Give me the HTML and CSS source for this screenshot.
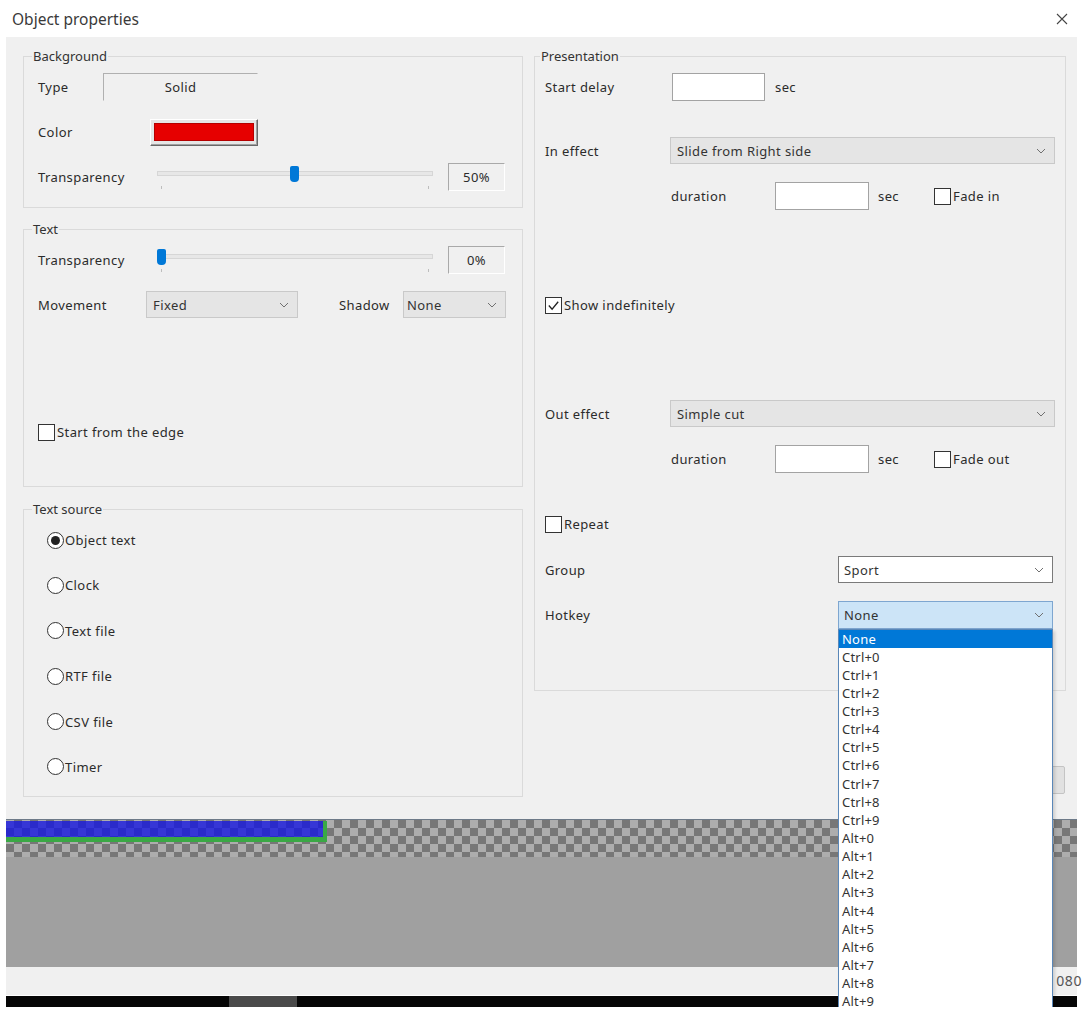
FILE: index.html
```html
<!DOCTYPE html>
<html lang="en">
<head>
    <meta charset="UTF-8">
    <meta name="viewport" content="width=device-width, initial-scale=1.0">
    <title>Object properties</title>
    <link rel="stylesheet" href="styles.css">
</head>
<body>
    <header class="titlebar">
        <span class="title">Object properties</span>
        <svg class="close" viewBox="0 0 12 12"><path d="M1 1 L11 11 M11 1 L1 11"/></svg>
    </header>

    <main class="dialog">
        <div class="columns">
            <div class="col col-left">
                <!-- BACKGROUND -->
                <fieldset class="group group-bg">
                    <legend>Background</legend>
                    <div class="row">
                        <span class="lbl lbl-type">Type</span>
                        <span class="sunken sunken-type">Solid</span>
                    </div>
                    <div class="row mt-17">
                        <span class="lbl lbl-color">Color</span>
                        <span class="color-btn"><span class="swatch"></span></span>
                    </div>
                    <div class="row mt-17">
                        <span class="lbl lbl-slider">Transparency</span>
                        <div class="slider">
                            <div class="rail"><span class="thumb" style="left: 50%"></span></div>
                        </div>
                        <span class="sunken sunken-value">50%</span>
                    </div>
                </fieldset>

                <!-- TEXT -->
                <fieldset class="group group-text">
                    <legend>Text</legend>
                    <div class="row">
                        <span class="lbl lbl-slider">Transparency</span>
                        <div class="slider">
                            <div class="rail"><span class="thumb" style="left: 0%"></span></div>
                        </div>
                        <span class="sunken sunken-value">0%</span>
                    </div>
                    <div class="row row-combo mt-17">
                        <span class="lbl lbl-move">Movement</span>
                        <span class="combo combo-move">Fixed<svg class="chev" viewBox="0 0 10 6"><polyline points="1,1 5,5 9,1"/></svg></span>
                        <span class="lbl lbl-shadow">Shadow</span>
                        <span class="combo combo-shadow">None<svg class="chev" viewBox="0 0 10 6"><polyline points="1,1 5,5 9,1"/></svg></span>
                    </div>
                    <label class="row row-check mt-104">
                        <span class="check"></span>Start from the edge
                    </label>
                </fieldset>

                <!-- TEXT SOURCE -->
                <fieldset class="group group-source">
                    <legend>Text source</legend>
                    <div class="radio-list">
                        <label class="row row-check"><span class="radio on"><span class="dot"></span></span>Object text</label>
                        <label class="row row-check"><span class="radio"></span>Clock</label>
                        <label class="row row-check"><span class="radio"></span>Text file</label>
                        <label class="row row-check"><span class="radio"></span>RTF file</label>
                        <label class="row row-check"><span class="radio"></span>CSV file</label>
                        <label class="row row-check"><span class="radio"></span>Timer</label>
                    </div>
                </fieldset>
            </div>

            <div class="col col-right">
                <!-- PRESENTATION -->
                <fieldset class="group group-present">
                    <legend>Presentation</legend>
                    <div class="row">
                        <span class="lbl lbl-wide">Start delay</span>
                        <span class="edit edit-delay"></span>
                        <span class="unit">sec</span>
                    </div>
                    <div class="row mt-36 row-combo">
                        <span class="lbl lbl-effect">In effect</span>
                        <span class="combo combo-effect">Slide from Right side<svg class="chev" viewBox="0 0 10 6"><polyline points="1,1 5,5 9,1"/></svg></span>
                    </div>
                    <div class="row mt-18 row-sub">
                        <span class="lbl lbl-dur">duration</span>
                        <span class="edit edit-dur"></span>
                        <span class="unit unit-dur">sec</span>
                        <span class="check"></span>Fade in
                    </div>
                    <label class="row row-check mt-85">
                        <span class="check checked"><svg viewBox="0 0 16 16"><polyline points="3,8 6.5,12 13,4"/></svg></span>Show indefinitely
                    </label>
                    <div class="row mt-85 row-combo">
                        <span class="lbl lbl-effect">Out effect</span>
                        <span class="combo combo-effect">Simple cut<svg class="chev" viewBox="0 0 10 6"><polyline points="1,1 5,5 9,1"/></svg></span>
                    </div>
                    <div class="row mt-18 row-sub">
                        <span class="lbl lbl-dur">duration</span>
                        <span class="edit edit-dur"></span>
                        <span class="unit unit-dur">sec</span>
                        <span class="check"></span>Fade out
                    </div>
                    <label class="row row-check mt-41">
                        <span class="check"></span>Repeat
                    </label>
                    <div class="row mt-22 row-combo">
                        <span class="lbl lbl-group">Group</span>
                        <span class="combo combo-edit">Sport<svg class="chev" viewBox="0 0 10 6"><polyline points="1,1 5,5 9,1"/></svg></span>
                    </div>
                    <div class="row mt-18 row-combo">
                        <span class="lbl lbl-group">Hotkey</span>
                        <div class="dropdown">
                            <span class="combo combo-edit combo-open">None<svg class="chev" viewBox="0 0 10 6"><polyline points="1,1 5,5 9,1"/></svg></span>
                            <ul class="list">
                                <li class="selected">None</li>
                                <li>Ctrl+0</li>
                                <li>Ctrl+1</li>
                                <li>Ctrl+2</li>
                                <li>Ctrl+3</li>
                                <li>Ctrl+4</li>
                                <li>Ctrl+5</li>
                                <li>Ctrl+6</li>
                                <li>Ctrl+7</li>
                                <li>Ctrl+8</li>
                                <li>Ctrl+9</li>
                                <li>Alt+0</li>
                                <li>Alt+1</li>
                                <li>Alt+2</li>
                                <li>Alt+3</li>
                                <li>Alt+4</li>
                                <li>Alt+5</li>
                                <li>Alt+6</li>
                                <li>Alt+7</li>
                                <li>Alt+8</li>
                                <li>Alt+9</li>
                            </ul>
                        </div>
                    </div>
                </fieldset>

                <div class="actions">
                    <button class="btn">OK</button>
                </div>
            </div>
        </div>

        <!-- PREVIEW -->
        <div class="preview">
            <div class="strip"><div class="ticker"></div></div>
        </div>
        <div class="status">1920 x 1080</div>
    </main>

    <div class="timeline"><span class="playhead"></span></div>
</body>
</html>
```

FILE: styles.css
```css
html, body {
    margin: 0;
    overflow: hidden;
}

body {
    background: #fff;
    font-family: "Noto Sans", "Open Sans", sans-serif;
    font-size: 13px;
    letter-spacing: 0.4px;
    color: #2b2b2b;
}

/* TITLE BAR */
.titlebar {
    height: 37px;
    display: flex;
    align-items: center;
    justify-content: space-between;
    padding: 0 19px 0 12px;
}

.title {
    font-size: 15.5px;
    letter-spacing: 0;
    color: #3a3a3a;
}

.close {
    width: 12px;
    height: 12px;
    stroke: #444;
    stroke-width: 1.1;
    fill: none;
}

/* DIALOG */
.dialog {
    margin: 0 10px 0 6px;
    background: #f0f0f0;
    padding-top: 11px;
}

.columns {
    display: flex;
    gap: 11px;
    padding-left: 17px;
}

.col-left {
    width: 500px;
    display: flex;
    flex-direction: column;
}

.col-right {
    width: 532px;
}

/* Group boxes */
.group {
    margin: 0;
    border: 1px solid #dadada;
    padding: 9px 8px 16px 8px;
    min-width: 0;
}

.group legend {
    padding: 0 1px;
    line-height: 16px;
    letter-spacing: 0;
    color: #333;
}

.group-text {
    margin-top: 13px;
    padding-bottom: 44px;
}

.group-source {
    margin-top: 14px;
    padding: 13px 8px 19px 8px;
}

.group-present {
    padding: 9px 10px 62px 5px;
}

.row {
    display: flex;
    align-items: center;
    height: 28px;
    padding-left: 6px;
}

.group-present .row {
    padding-left: 5px;
}

.row-combo {
    height: 27px;
}

.row-check {
    height: 20px;
}

.mt-17 { margin-top: 17px; }
.mt-18 { margin-top: 18px; }
.mt-22 { margin-top: 22px; }
.mt-36 { margin-top: 36px; }
.mt-41 { margin-top: 41px; }
.mt-85 { margin-top: 85px; }
.mt-104 { margin-top: 104px; }

.lbl {
    flex: 0 0 auto;
}

.lbl-type { width: 65px; }
.lbl-color { width: 112px; }
.lbl-slider { width: 117px; }
.lbl-move { width: 108px; }
.lbl-shadow { width: 64px; margin-left: 41px; }
.lbl-wide { width: 127px; }
.lbl-effect { width: 125px; }
.lbl-dur { width: 104px; }
.lbl-group { width: 293px; }

.row-sub {
    padding-left: 131px !important;
}

/* Sunken statics */
.sunken {
    box-sizing: border-box;
    height: 28px;
    display: flex;
    align-items: center;
    justify-content: center;
    border: 1px solid;
    border-color: #a9a9a9 #fff #fff #a9a9a9;
}

.sunken-type {
    width: 155px;
    border-color: #b0b0b0 transparent transparent #b0b0b0;
}

.sunken-value {
    width: 57px;
    margin-left: 13px;
}

/* Color button */
.color-btn {
    box-sizing: border-box;
    width: 108px;
    height: 27px;
    padding: 3px 3px 4px 3px;
    border: 1px solid;
    border-color: #fff #696969 #696969 #fff;
    box-shadow: inset -1px -1px 0 #a0a0a0;
    background: #e6e6e6;
    display: flex;
}

.swatch {
    flex: 1;
    background: #e60000;
    border: 1px solid #b40000;
}

/* Slider */
.slider {
    position: relative;
    width: 280px;
    height: 28px;
}

.slider::before {
    content: "";
    position: absolute;
    left: 2px;
    right: 2px;
    top: 8px;
    height: 3px;
    background: #e7e7e7;
    border: 1px solid #d6d6d6;
}

.slider::after {
    content: "";
    position: absolute;
    left: 6px;
    right: 6px;
    top: 23px;
    height: 3px;
    border-left: 1px solid #bdbdbd;
    border-right: 1px solid #bdbdbd;
}

.rail {
    position: relative;
    margin: 0 7px;
    height: 100%;
}

.thumb {
    position: absolute;
    top: 3px;
    width: 9px;
    height: 16px;
    margin-left: -5px;
    background: #0078d7;
    border-radius: 2px 2px 4px 4px;
}

/* Combo boxes */
.combo {
    box-sizing: border-box;
    height: 100%;
    display: flex;
    align-items: center;
    justify-content: space-between;
    padding: 0 8px 0 6px;
    background: #e5e5e5;
    border: 1px solid #c9c9c9;
    color: #333;
}

.combo-move { width: 152px; }
.combo-shadow { width: 103px; padding-left: 3px; }
.combo-effect { width: 385px; }

.combo-edit {
    width: 215px;
    background: #fff;
    border-color: #7a7a7a;
    padding-left: 5px;
}

.combo-open {
    height: 28px;
    background: #cce4f7;
    border-color: #7ea6d0;
}

.chev {
    width: 10px;
    height: 6px;
    fill: none;
    stroke: #707070;
    stroke-width: 1;
}

/* Edits */
.edit {
    box-sizing: border-box;
    height: 28px;
    background: #fff;
    border: 1px solid #a3a3a3;
}

.edit-delay { width: 93px; }
.edit-dur { width: 94px; }

.unit {
    margin-left: 10px;
}

.unit-dur {
    width: 56px;
    margin-left: 9px;
}

/* Check & radio */
.check {
    box-sizing: border-box;
    width: 17px;
    height: 17px;
    margin-right: 2px;
    background: #fff;
    border: 1px solid #333;
    display: flex;
}

.check svg {
    width: 100%;
    height: 100%;
    fill: none;
    stroke: #222;
    stroke-width: 1.4;
}

.radio-list {
    display: flex;
    flex-direction: column;
    gap: 25.4px;
}

.radio-list .row {
    padding-left: 15px;
}

.radio {
    box-sizing: border-box;
    width: 17px;
    height: 17px;
    margin-right: 1px;
    border-radius: 50%;
    background: #fff;
    border: 1px solid #333;
    display: flex;
    align-items: center;
    justify-content: center;
}

.radio .dot {
    width: 9px;
    height: 9px;
    border-radius: 50%;
    background: #222;
}

/* Dropdown popup */
.dropdown {
    position: relative;
    height: 28px;
}

.list {
    position: absolute;
    top: 100%;
    left: 0;
    z-index: 10;
    box-sizing: border-box;
    width: 215px;
    margin: 0;
    padding: 0;
    list-style: none;
    background: #fff;
    border: 1px solid #5a87b8;
    box-shadow: 2px 2px 3px rgba(0,0,0,0.15);
}

.list li {
    height: 18.15px;
    line-height: 18.15px;
    padding-left: 3px;
    letter-spacing: 0.2px;
    color: #333;
}

.list li.selected {
    background: #0078d7;
    color: #fff;
}

/* Buttons */
.actions {
    display: flex;
    justify-content: flex-end;
    margin-top: 75px;
    padding-right: 1px;
}

.btn {
    width: 85px;
    height: 28px;
    font: inherit;
    background: #e1e1e1;
    border: 1px solid #c4c4c4;
    border-radius: 2px;
}

/* PREVIEW */
.preview {
    margin-top: 22px;
    height: 148px;
    background: #a0a0a0;
}

.strip {
    height: 37px;
    border-top: 1px solid #6d7a88;
    background: repeating-conic-gradient(#777 0 25%, #adadad 0 50%) 0 0 / 16px 16px;
}

.ticker {
    box-sizing: border-box;
    width: 321px;
    height: 21px;
    margin-top: 1px;
    background: rgba(20, 20, 225, 0.78);
    border-right: 4px solid #3aa845;
    border-bottom: 5px solid #3aa845;
}

.status {
    height: 28px;
    display: flex;
    align-items: center;
    justify-content: flex-end;
    margin-right: -5px;
    font-size: 14px;
    letter-spacing: 0.6px;
    color: #555;
}

/* TIMELINE */
.timeline {
    margin: 1px 10px 0 6px;
    height: 11px;
    background: #060606;
    padding-left: 223px;
}

.playhead {
    display: block;
    width: 68px;
    height: 100%;
    background: #4a4a4a;
}
```
